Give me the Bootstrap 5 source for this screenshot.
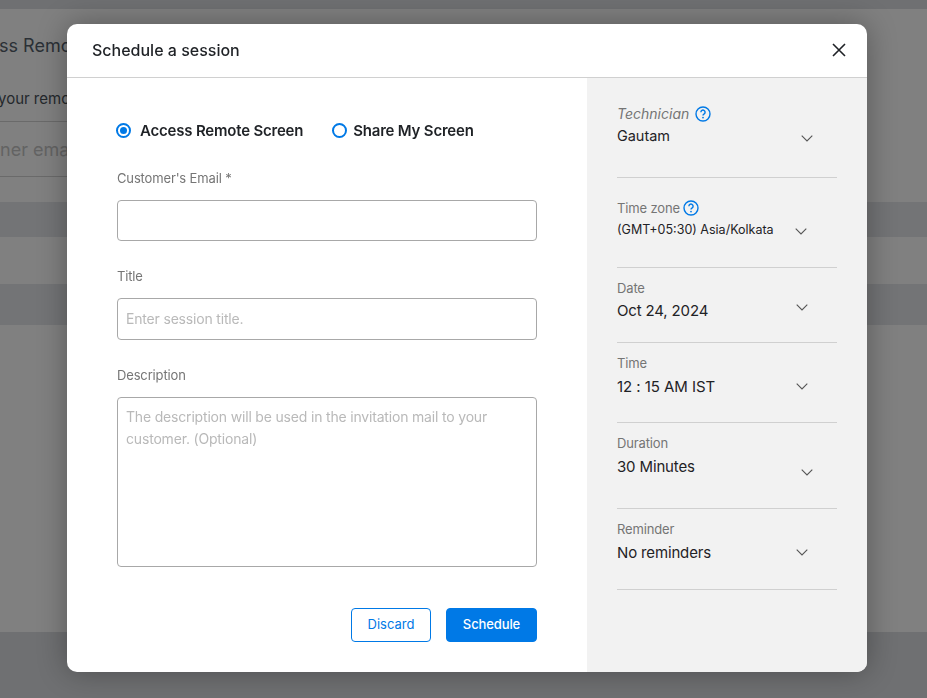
<!DOCTYPE html>
<html lang="en">
<head>
<meta charset="utf-8">
<title>Schedule a session</title>
<link href="https://cdn.jsdelivr.net/npm/bootstrap@5.3.0/dist/css/bootstrap.min.css" rel="stylesheet">
<style>
html,body{height:698px;overflow:hidden}
body{font-family:Inter,"Liberation Sans",sans-serif;background:#808080;color:#1f2226}
.bg-top{height:9px;background:#6f7072}
.bg-page{height:623px;display:flex;flex-direction:column}
.bg-clip{width:67px;overflow:hidden}
.bg-title{font-size:18px;line-height:24px;color:#2b3036;margin:25px 0 0 -1px;white-space:nowrap}
.bg-sub{font-size:15px;line-height:20px;color:#24282c;margin:31px 0 0 -2px;white-space:nowrap;padding-bottom:12px;border-bottom:1px solid #6a6a6a}
.bg-mail{font-size:18px;line-height:24px;color:#636363;padding:16px 0 14px;white-space:nowrap;border-bottom:1px solid #6a6a6a}
.bg-band1{height:35px;background:#737476;margin-top:25px}
.bg-band2{height:41px;background:#737476;margin-top:47px}
.bg-bottom{height:66px;background:#6f7072}
.sched-overlay{position:fixed;inset:0;display:flex;padding:24px 60px 26px 67px}
.sched-modal{width:800px;height:648px;background:#fff;border-radius:10px;box-shadow:0 0 30px rgba(0,0,0,.32);overflow:hidden;display:flex;flex-direction:column}
.sched-head{height:54px;border-bottom:1px solid #d0d0d0;padding:0 21px 2px 25px;display:flex;align-items:center;justify-content:space-between}
.sched-head h1{font-size:16px;font-weight:500;margin:0;color:#1f2226;line-height:24px}
.sched-x{background:none;border:0;padding:0;line-height:0}
.sched-body{flex:1;display:flex;min-height:0}
.sched-left{width:520px;padding:42px 50px 0}
.sched-right{width:280px;background:#f2f2f2;padding:0 30px}
.radio-row{display:flex;gap:29px;height:21px;margin-bottom:28px;margin-left:-1px}
.radio-item{display:flex;align-items:center;gap:9px;font-size:15px;font-weight:600;letter-spacing:-.2px;color:#1f2226;line-height:21px;white-space:nowrap}
.radio-dot{width:15px;height:15px;border:2px solid #0079e6;border-radius:50%;display:flex;align-items:center;justify-content:center;flex:none}
.radio-dot i{display:block;width:7px;height:7px;border-radius:50%;background:#0079e6}
.radio-item.off{gap:6px}
.fld-label{display:block;font-size:13px;line-height:18px;color:#757575;letter-spacing:-.15px;margin:0 0 13px}
.fld-input{display:block;width:100%;height:41px;border:1px solid #a8a8a8;border-radius:4px;padding:0 8px;font-size:14px;letter-spacing:-.18px;line-height:20px;color:#1f2226;background:#fff;font-family:inherit;margin-bottom:26px;outline:0}
.fld-area{height:170px;padding:8px;line-height:22px;resize:none;margin-bottom:41px}
.fld-title{height:42px;padding-bottom:2px;margin-bottom:26px}
.fld-input::placeholder{color:#b9b9b9;opacity:1}
.act-row{display:flex;justify-content:flex-end;gap:15px}
.btn.act-btn{height:34px;font-size:13px;font-weight:400;line-height:20px;padding:0 0 2px;border-radius:4px}
.btn.act-ghost{width:80px;background:#fff;border:1px solid #0079e6;color:#0079e6}
.btn.act-main{width:91px;background:#0079e6;border:1px solid #0079e6;color:#fff;font-weight:500;letter-spacing:-.1px}
.side-item{position:relative;border-bottom:1px solid #d0d0d0}
.side-label{font-size:13px;line-height:18px;color:#757575;letter-spacing:-.15px;display:flex;align-items:center;gap:5px}
.side-val{font-size:15px;letter-spacing:-.15px;line-height:20px;color:#1f2226;white-space:nowrap}
.side-chev{position:absolute;line-height:0}
.it-tech{height:100px;padding-top:27px}
.it-tech .side-label{font-style:italic;font-size:14px;letter-spacing:0;gap:6px}
.it-tech .side-val{font-size:14.5px;letter-spacing:-.05px;margin-top:3px}
.it-zone{height:90px;padding-top:21px}
.it-zone .side-label{gap:3px}
.it-zone .side-val{font-size:12.5px;letter-spacing:0;margin-top:3px}
.it-date{height:75px;padding-top:11px}
.it-date .side-val{margin-top:4px}
.it-time{height:80px;padding-top:11px}
.it-time .side-val{margin-top:5px;letter-spacing:-.05px}
.it-dur{height:86px;padding-top:11px}
.it-dur .side-val{margin-top:5px}
.it-rem{height:81px;padding-top:11px}
.it-rem .side-val{margin-top:5px}
.chev-a{left:184px;top:57px}
.chev-b{left:178px;top:50px}
.chev-c{left:179px;top:36px}
.chev-d{left:179px;top:40px}
.chev-e{left:184px;top:46px}
.chev-f{left:179px;top:40px}
</style>
</head>
<body>
<div class="bg-top"></div>
<div class="bg-page">
  <div class="bg-clip">
    <div class="bg-title">ss Remo</div>
    <div class="bg-sub">your remo</div>
    <div class="bg-mail">ner ema</div>
  </div>
  <div class="bg-band1"></div>
  <div class="bg-band2"></div>
</div>
<div class="bg-bottom"></div>

<div class="sched-overlay">
  <div class="sched-modal">
    <div class="sched-head">
      <h1>Schedule a session</h1>
      <button class="sched-x" type="button" aria-label="Close">
        <svg width="14" height="14" viewBox="0 0 14 14"><path d="M1 1l12 12M13 1L1 13" stroke="#1f2226" stroke-width="1.6" fill="none"/></svg>
      </button>
    </div>
    <div class="sched-body">
      <div class="sched-left">
        <div class="radio-row">
          <div class="radio-item"><span class="radio-dot"><i></i></span>Access Remote Screen</div>
          <div class="radio-item off"><span class="radio-dot"></span>Share My Screen</div>
        </div>
        <label class="fld-label">Customer's Email *</label>
        <input class="fld-input" type="text">
        <label class="fld-label">Title</label>
        <input class="fld-input fld-title" type="text" placeholder="Enter session title.">
        <label class="fld-label">Description</label>
        <textarea class="fld-input fld-area" placeholder="The description will be used in the invitation mail to your customer. (Optional)"></textarea>
        <div class="act-row">
          <button type="button" class="btn act-btn act-ghost">Discard</button>
          <button type="button" class="btn act-btn act-main">Schedule</button>
        </div>
      </div>
      <div class="sched-right">
        <div class="side-item it-tech">
          <div class="side-label">Technician
            <svg width="16" height="16" viewBox="0 0 16 16"><circle cx="8" cy="8" r="7" fill="none" stroke="#0079e6" stroke-width="1.4"/><path d="M5.9 6.2a2.1 2.1 0 1 1 3.3 1.7c-.8.5-1.2.9-1.2 1.7" fill="none" stroke="#0079e6" stroke-width="1.4"/><circle cx="8" cy="11.6" r=".9" fill="#0079e6"/></svg>
          </div>
          <div class="side-val">Gautam</div>
          <svg class="side-chev chev-a" width="12" height="7" viewBox="0 0 12 7"><path d="M.7.7L6 6l5.3-5.3" fill="none" stroke="#555" stroke-width="1.1"/></svg>
        </div>
        <div class="side-item it-zone">
          <div class="side-label">Time zone
            <svg width="16" height="16" viewBox="0 0 16 16"><circle cx="8" cy="8" r="7" fill="none" stroke="#0079e6" stroke-width="1.4"/><path d="M5.9 6.2a2.1 2.1 0 1 1 3.3 1.7c-.8.5-1.2.9-1.2 1.7" fill="none" stroke="#0079e6" stroke-width="1.4"/><circle cx="8" cy="11.6" r=".9" fill="#0079e6"/></svg>
          </div>
          <div class="side-val">(GMT+05:30) Asia/Kolkata</div>
          <svg class="side-chev chev-b" width="12" height="7" viewBox="0 0 12 7"><path d="M.7.7L6 6l5.3-5.3" fill="none" stroke="#555" stroke-width="1.1"/></svg>
        </div>
        <div class="side-item it-date">
          <div class="side-label">Date</div>
          <div class="side-val">Oct 24, 2024</div>
          <svg class="side-chev chev-c" width="12" height="7" viewBox="0 0 12 7"><path d="M.7.7L6 6l5.3-5.3" fill="none" stroke="#555" stroke-width="1.1"/></svg>
        </div>
        <div class="side-item it-time">
          <div class="side-label">Time</div>
          <div class="side-val">12 : 15 AM IST</div>
          <svg class="side-chev chev-d" width="12" height="7" viewBox="0 0 12 7"><path d="M.7.7L6 6l5.3-5.3" fill="none" stroke="#555" stroke-width="1.1"/></svg>
        </div>
        <div class="side-item it-dur">
          <div class="side-label">Duration</div>
          <div class="side-val">30 Minutes</div>
          <svg class="side-chev chev-e" width="12" height="7" viewBox="0 0 12 7"><path d="M.7.7L6 6l5.3-5.3" fill="none" stroke="#555" stroke-width="1.1"/></svg>
        </div>
        <div class="side-item it-rem">
          <div class="side-label">Reminder</div>
          <div class="side-val">No reminders</div>
          <svg class="side-chev chev-f" width="12" height="7" viewBox="0 0 12 7"><path d="M.7.7L6 6l5.3-5.3" fill="none" stroke="#555" stroke-width="1.1"/></svg>
        </div>
      </div>
    </div>
  </div>
</div>
<script src="https://cdn.jsdelivr.net/npm/bootstrap@5.3.0/dist/js/bootstrap.bundle.min.js"></script>
</body>
</html>
